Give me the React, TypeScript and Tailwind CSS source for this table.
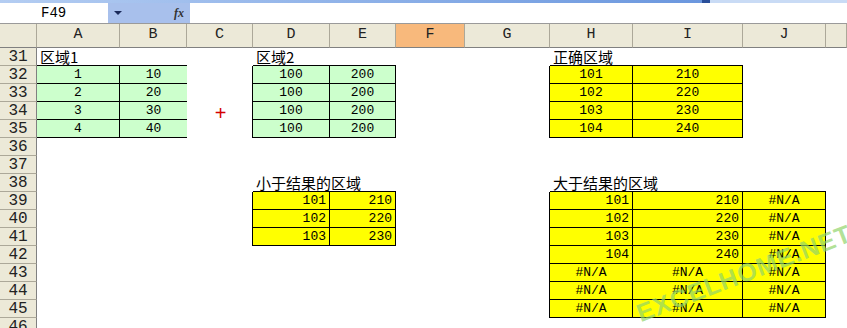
import React from "react";

type Cell = { v: string; align?: "l" | "c" | "r"; fill?: string; red?: boolean };

const cols = ["A", "B", "C", "D", "E", "F", "G", "H", "I", "J", "K"];
const rows = Array.from({ length: 16 }, (_, i) => 31 + i);

const green = "bg-[#ccffcc]";
const yellow = "bg-[#ffff00]";

const cells: Record<string, Cell> = {
  A31: { v: "区域1", align: "l" },
  D31: { v: "区域2", align: "l" },
  H31: { v: "正确区域", align: "l" },
  D38: { v: "小于结果的区域", align: "l" },
  H38: { v: "大于结果的区域", align: "l" },
  C34: { v: "+", align: "c", red: true },
};

[1, 2, 3, 4].forEach((n, i) => {
  const r = 32 + i;
  cells[`A${r}`] = { v: `${n}`, align: "c", fill: green };
  cells[`B${r}`] = { v: `${n * 10}`, align: "c", fill: green };
  cells[`D${r}`] = { v: "100", align: "c", fill: green };
  cells[`E${r}`] = { v: "200", align: "c", fill: green };
  cells[`H${r}`] = { v: `${100 + n}`, align: "c", fill: yellow };
  cells[`I${r}`] = { v: `${200 + n * 10}`, align: "c", fill: yellow };
});

[1, 2, 3].forEach((n, i) => {
  const r = 39 + i;
  cells[`D${r}`] = { v: `${100 + n}`, align: "r", fill: yellow };
  cells[`E${r}`] = { v: `${200 + n * 10}`, align: "r", fill: yellow };
});

[1, 2, 3, 4].forEach((n, i) => {
  const r = 39 + i;
  cells[`H${r}`] = { v: `${100 + n}`, align: "r", fill: yellow };
  cells[`I${r}`] = { v: `${200 + n * 10}`, align: "r", fill: yellow };
  cells[`J${r}`] = { v: "#N/A", align: "c", fill: yellow };
});

[43, 44, 45].forEach((r) => {
  ["H", "I", "J"].forEach((c) => {
    cells[`${c}${r}`] = { v: "#N/A", align: "c", fill: yellow };
  });
});

// bordered ranges: [firstCol, lastCol, firstRow, lastRow, rightEdge]
const ranges: [number, number, number, number, boolean][] = [
  [0, 1, 32, 35, false],
  [3, 4, 32, 35, true],
  [7, 8, 32, 35, true],
  [3, 4, 39, 41, true],
  [7, 9, 39, 45, true],
];

function clsx(...xs: string[]) {
  return xs.filter(Boolean).join(" ");
}

const lines = (c: number, r: number) => {
  let right = false;
  let bottom = false;
  for (const [c1, c2, r1, r2, edge] of ranges) {
    if (r >= r1 && r <= r2) {
      if (c === c1 - 1) right = true;
      if (c >= c1 && c < c2) right = true;
      if (c === c2 && edge) right = true;
    }
    if (c >= c1 && c <= c2 && r >= r1 - 1 && r <= r2) bottom = true;
  }
  return clsx(
    right ? "border-r border-r-black" : "",
    bottom ? "border-b border-b-black" : ""
  );
};

const isCjk = (s: string) => /[\u4e00-\u9fff]/.test(s);

export default function App() {
  return (
    <div className="relative w-[847px] h-[328px] overflow-hidden bg-white">
      <div className="flex h-[3px]">
        <div className="w-[702px] bg-gradient-to-r from-[#b4cdf2] to-[#6b97de]" />
        <div className="w-[8px] bg-[#2a4f9a]" />
        <div className="flex-1 bg-[#c9dbf5]" />
      </div>
      <div className="flex h-[21px] border-b border-[#9a9a9a]">
        <div className="w-[108px] bg-white flex items-center pl-[41px] text-[14px] text-black font-['Liberation_Mono',monospace]">
          F49
        </div>
        <div className="w-[82px] bg-[#a8c0ec] flex items-center justify-between pl-[6px] pr-[6px]">
          <span className="w-0 h-0 border-l-[4px] border-r-[4px] border-t-[4px] border-l-transparent border-r-transparent border-t-[#1a2a5a]" />
          <span className="text-[12px] italic font-bold text-[#333] font-['Liberation_Serif',serif]">
            fx
          </span>
        </div>
        <div className="flex-1 bg-white" />
      </div>

      <div className="grid grid-cols-[37px_83px_67px_66px_77px_66px_69px_85px_83px_110px_83px_21px] grid-rows-[24px_repeat(16,18px)]">
        <div className="bg-[#ece9d8] border-r border-b border-r-[#aca899] border-b-[#808080]" />
        {cols.map((c) => (
          <div
            key={c}
            className={clsx(
              "flex items-center justify-center border-r border-b border-r-[#aca899] border-b-[#808080] text-[15px] text-[#222] font-['Liberation_Mono',monospace]",
              c === "F" ? "bg-[#f8b97c]" : "bg-[#ece9d8]"
            )}
          >
            {c === "K" ? "" : c}
          </div>
        ))}
        {rows.map((r) => (
          <React.Fragment key={r}>
            <div className="flex items-center justify-center bg-[#ece9d8] border-r border-b border-r-[#808080] border-b-[#aca899] text-[16px] text-[#222] font-['Liberation_Mono',monospace] overflow-hidden">
              {r}
            </div>
            {cols.map((c, ci) => {
              const cell = cells[`${c}${r}`];
              const cjk = cell ? isCjk(cell.v) : false;
              return (
                <div
                  key={c}
                  className={clsx(
                    "flex items-center whitespace-nowrap min-w-0",
                    cell?.fill ?? "",
                    lines(ci, r),
                    cell?.align === "c" ? "justify-center" : "",
                    cell?.align === "r" ? "justify-end pr-[3px]" : "",
                    cell?.align === "l" ? "justify-start pl-[3px]" : ""
                  )}
                >
                  {cell && (
                    <span
                      className={clsx(
                        cell.red
                          ? "text-[20px] leading-none text-[#d40000] font-['Liberation_Sans',sans-serif] pl-[2px] pt-[3px]"
                          : cjk
                          ? "text-[15px] text-black font-['Noto_Sans_CJK_SC',sans-serif] leading-none"
                          : "text-[13px] text-black font-['Liberation_Mono','Noto_Sans_CJK_SC',monospace]"
                      )}
                    >
                      {cell.v}
                    </span>
                  )}
                </div>
              );
            })}
          </React.Fragment>
        ))}
      </div>

      <div className="absolute left-[630px] top-[259px] -rotate-[21deg] origin-center text-[25px] leading-[29px] font-bold tracking-[1px] text-[#8fd46a]/70 font-['Liberation_Sans',sans-serif] pointer-events-none">
        EXCELHOME.NET
      </div>
    </div>
  );
}
